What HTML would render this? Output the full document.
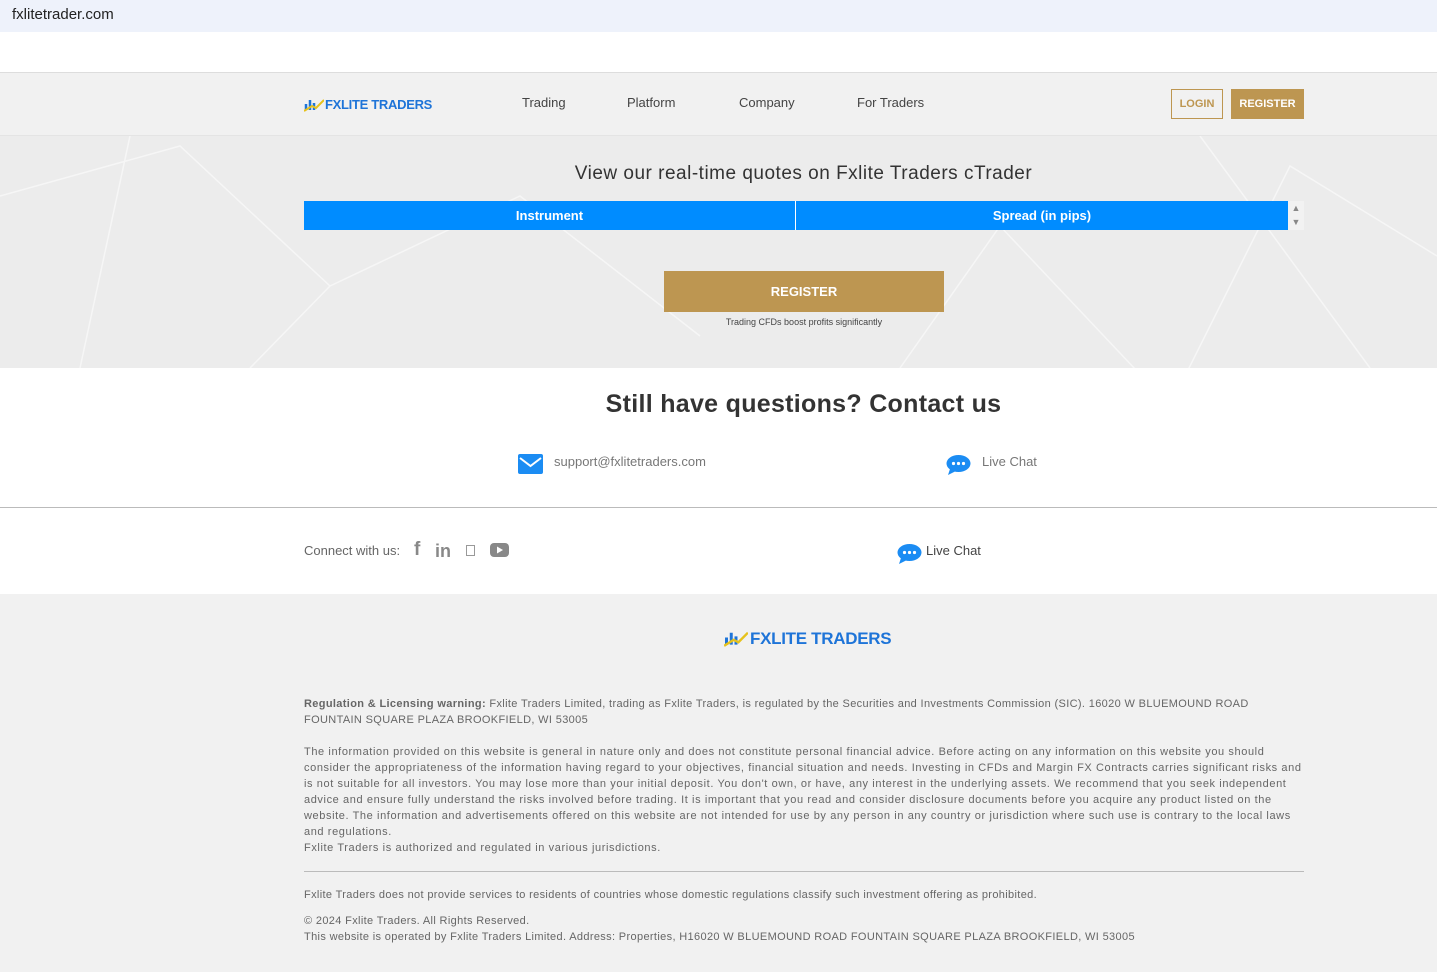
<!DOCTYPE html>
<html><head><meta charset="utf-8"><style>
*{margin:0;padding:0;box-sizing:border-box}
body{width:1437px;height:972px;overflow:hidden;font-family:"Liberation Sans",sans-serif;background:#fff;color:#555;position:relative}
.abs{position:absolute}
.logo{font-weight:bold;color:#1e74d8;letter-spacing:-0.3px}
</style></head><body>
<div class="abs" style="left:0;top:0;width:1437px;height:32px;background:#eef2fb"></div>
<div class="abs" style="left:12px;top:6px;font-size:15px;color:#222">fxlitetrader.com</div>
<div class="abs" style="left:0;top:72px;width:1437px;height:64px;background:#f1f1f1;border-top:1px solid #ddd;border-bottom:1px solid #e4e4e4"></div>
<div class="abs" style="left:304px;top:96px;">
<svg width="20" height="16" viewBox="0 0 20 16"><path d="M2 14 L2 8 M6 14 L6 4 M10 14 L10 7" stroke="#1e74d8" stroke-width="2.5"/><path d="M0 15 L8 10 L12 12 L20 4" stroke="#e6c21c" stroke-width="2" fill="none"/></svg></div>
<div class="abs logo" style="left:325px;top:97px;font-size:13px">FXLITE TRADERS</div>
<div class="abs" style="left:522px;top:95px;font-size:13px;color:#444">Trading</div>
<div class="abs" style="left:627px;top:95px;font-size:13px;color:#444">Platform</div>
<div class="abs" style="left:739px;top:95px;font-size:13px;color:#444">Company</div>
<div class="abs" style="left:857px;top:95px;font-size:13px;color:#444">For Traders</div>
<div class="abs" style="left:1171px;top:89px;width:52px;height:30px;border:1px solid #bd9651;color:#bd9651;font-size:11px;font-weight:bold;text-align:center;line-height:28px">LOGIN</div>
<div class="abs" style="left:1231px;top:89px;width:73px;height:30px;background:#bd9651;color:#fff;font-size:11px;font-weight:bold;text-align:center;line-height:30px">REGISTER</div>
<div class="abs" style="left:0;top:136px;width:1437px;height:232px;background:#ececec"></div>
<svg class="abs" style="left:0;top:136px" width="1437" height="232"><g stroke="#f6f6f6" stroke-width="1.5" fill="none"><path d="M0 60 L180 10 L330 150 L520 60 L700 200 M900 232 L1000 90 L1170 270 L1290 30 L1437 120 M130 0 L80 232 M1200 0 L1370 232 M330 150 L250 232"/></g></svg>
<div class="abs" style="left:0;top:163px;width:1607px;text-align:center;font-size:19px;color:#333;letter-spacing:0.5px">View our real-time quotes on Fxlite Traders cTrader</div>
<div class="abs" style="left:304px;top:201px;width:984px;height:29px;background:#008cff;display:flex;color:#fff;font-weight:bold;font-size:13px">
<div style="width:492px;text-align:center;line-height:29px;border-right:1px solid #fff">Instrument</div>
<div style="flex:1;text-align:center;line-height:29px">Spread (in pips)</div></div>
<div class="abs" style="left:1288px;top:201px;width:16px;height:29px;background:#f2f2f2;color:#888;font-size:9px;text-align:center;line-height:14px">▲<br>▼</div>
<div class="abs" style="left:664px;top:271px;width:280px;height:41px;background:#bd9651;color:#fff;font-weight:bold;font-size:13px;text-align:center;line-height:41px">REGISTER</div>
<div class="abs" style="left:664px;top:317px;width:280px;text-align:center;font-size:9px;color:#444">Trading CFDs boost profits significantly</div>
<div class="abs" style="left:0;top:390px;width:1607px;text-align:center;font-size:25px;font-weight:bold;color:#333;letter-spacing:0.3px">Still have questions? Contact us</div>
<svg class="abs" style="left:518px;top:454px" width="25" height="20"><rect width="25" height="20" rx="2" fill="#1b8cf3"/><path d="M2 4 L12.5 12 L23 4" stroke="#fff" stroke-width="2" fill="none"/></svg>
<div class="abs" style="left:554px;top:454px;font-size:13px;color:#777">support@fxlitetraders.com</div>
<svg class="abs" style="left:946px;top:454px" width="25" height="21"><ellipse cx="12.5" cy="9.5" rx="12" ry="8.5" fill="#1b8cf3"/><path d="M4 15 L2 21 L10 17Z" fill="#1b8cf3"/><circle cx="7.5" cy="9.5" r="1.6" fill="#fff"/><circle cx="12.5" cy="9.5" r="1.6" fill="#fff"/><circle cx="17.5" cy="9.5" r="1.6" fill="#fff"/></svg>
<div class="abs" style="left:982px;top:454px;font-size:13px;color:#777">Live Chat</div>
<div class="abs" style="left:0;top:507px;width:1437px;height:1px;background:#bbb"></div>
<div class="abs" style="left:304px;top:543px;font-size:13px;color:#666">Connect with us:</div>
<div class="abs" style="left:414px;top:539px;font-size:19px;font-weight:bold;color:#888">f</div>
<div class="abs" style="left:435px;top:541px;font-size:18px;font-weight:bold;color:#888">in</div>
<div class="abs" style="left:466px;top:545px;width:9px;height:11px;border:1px solid #999"></div>
<svg class="abs" style="left:490px;top:543px" width="19" height="14"><rect width="19" height="14" rx="4" fill="#888"/><path d="M7 3.5 L13 7 L7 10.5Z" fill="#fff"/></svg>
<svg class="abs" style="left:897px;top:543px" width="25" height="21"><ellipse cx="12.5" cy="9.5" rx="12" ry="8.5" fill="#1b8cf3"/><path d="M4 15 L2 21 L10 17Z" fill="#1b8cf3"/><circle cx="7.5" cy="9.5" r="1.6" fill="#fff"/><circle cx="12.5" cy="9.5" r="1.6" fill="#fff"/><circle cx="17.5" cy="9.5" r="1.6" fill="#fff"/></svg>
<div class="abs" style="left:926px;top:543px;font-size:13px;color:#444">Live Chat</div>
<div class="abs" style="left:0;top:594px;width:1437px;height:378px;background:#f1f1f1"></div>
<div class="abs" style="left:724px;top:628px;"><svg width="24" height="19" viewBox="0 0 20 16"><path d="M2 14 L2 8 M6 14 L6 4 M10 14 L10 7" stroke="#1e74d8" stroke-width="2.5"/><path d="M0 15 L8 10 L12 12 L20 4" stroke="#e6c21c" stroke-width="2" fill="none"/></svg></div>
<div class="abs logo" style="left:750px;top:629px;font-size:17px">FXLITE TRADERS</div>
<div class="abs" style="left:304px;top:696px;width:1000px;font-size:11px;line-height:16px;color:#666;letter-spacing:0.35px">
<p><b>Regulation &amp; Licensing warning:</b> Fxlite Traders Limited, trading as Fxlite Traders, is regulated by the Securities and Investments Commission (SIC). 16020 W BLUEMOUND ROAD FOUNTAIN SQUARE PLAZA BROOKFIELD, WI 53005</p>
<p style="margin-top:16px;letter-spacing:0.6px">The information provided on this website is general in nature only and does not constitute personal financial advice. Before acting on any information on this website you should consider the appropriateness of the information having regard to your objectives, financial situation and needs. Investing in CFDs and Margin FX Contracts carries significant risks and is not suitable for all investors. You may lose more than your initial deposit. You don't own, or have, any interest in the underlying assets. We recommend that you seek independent advice and ensure fully understand the risks involved before trading. It is important that you read and consider disclosure documents before you acquire any product listed on the website. The information and advertisements offered on this website are not intended for use by any person in any country or jurisdiction where such use is contrary to the local laws and regulations.<br>Fxlite Traders is authorized and regulated in various jurisdictions.</p>
</div>
<div class="abs" style="left:304px;top:871px;width:1000px;height:1px;background:#bbb"></div>
<div class="abs" style="left:304px;top:889px;font-size:11px;color:#666;letter-spacing:0.35px">Fxlite Traders does not provide services to residents of countries whose domestic regulations classify such investment offering as prohibited.</div>
<div class="abs" style="left:304px;top:913px;font-size:11px;line-height:16px;color:#666;letter-spacing:0.35px">© 2024 Fxlite Traders. All Rights Reserved.<br>This website is operated by Fxlite Traders Limited. Address: Properties, H16020 W BLUEMOUND ROAD FOUNTAIN SQUARE PLAZA BROOKFIELD, WI 53005</div>
</body></html>
